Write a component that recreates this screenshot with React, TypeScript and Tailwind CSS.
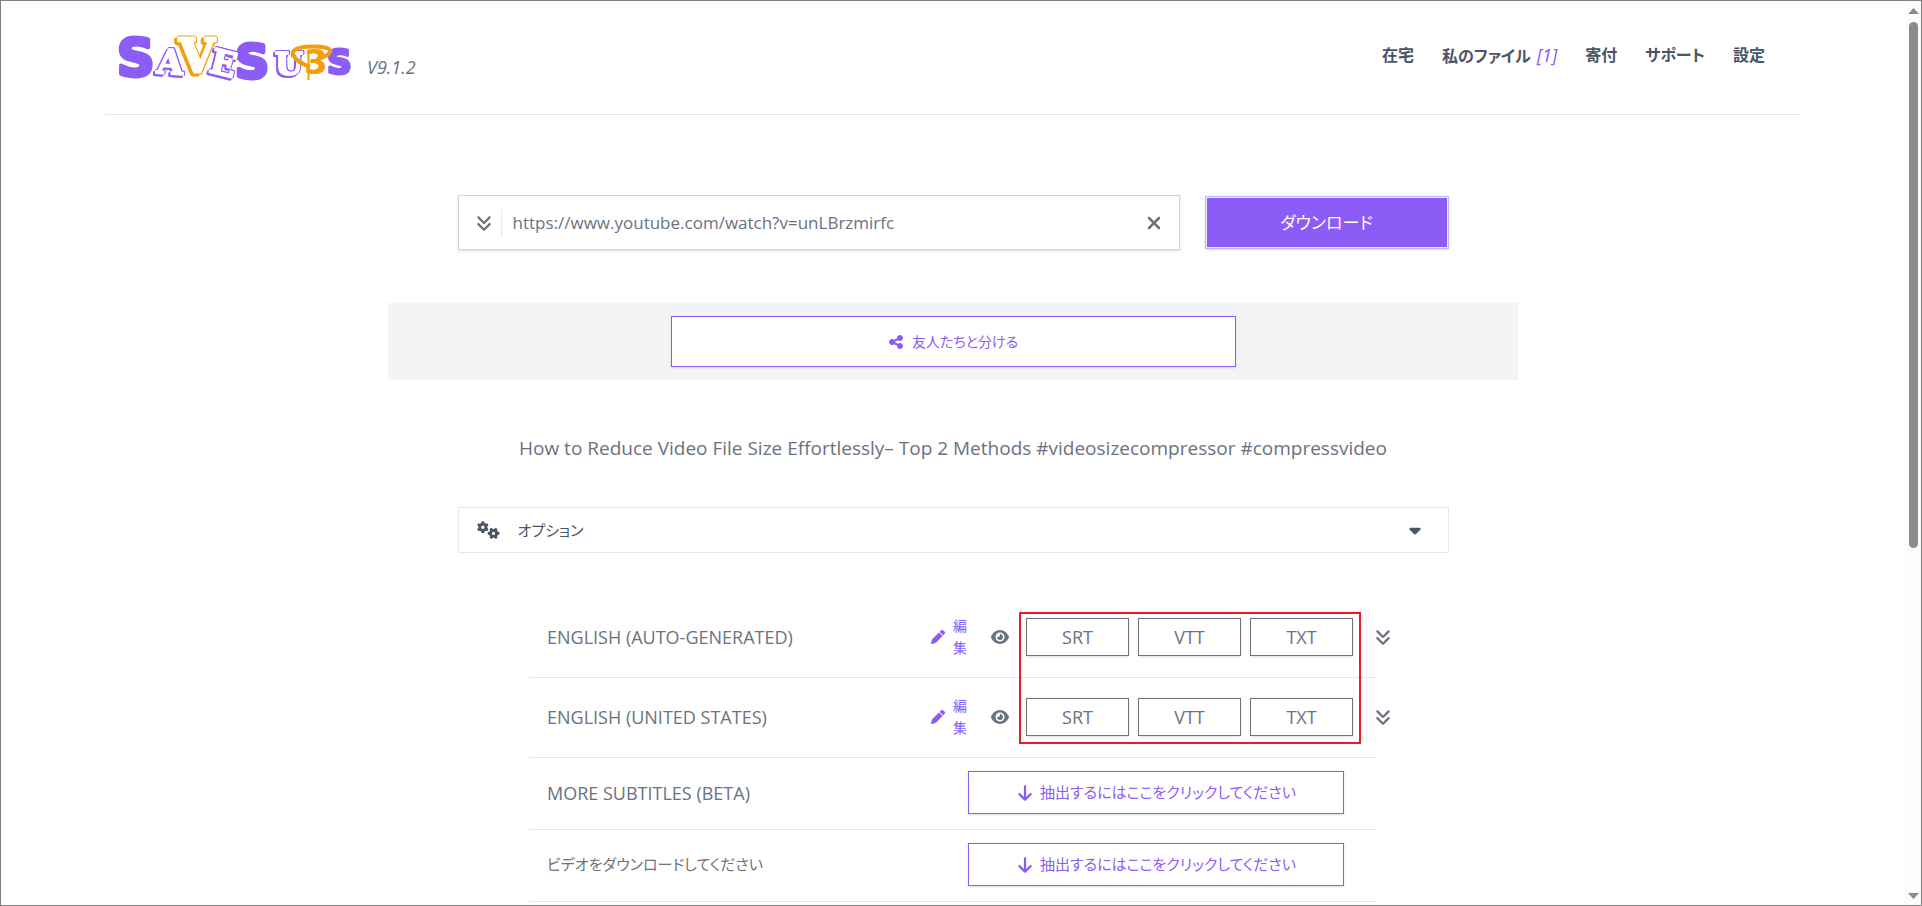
import {
  FaAnglesDown,
  FaArrowDown,
  FaCaretDown,
  FaEye,
  FaGears,
  FaPen,
  FaShareNodes,
  FaXmark,
} from 'react-icons/fa6';

const navItems = [
  { label: '在宅' },
  { label: '私のファイル', count: 1 },
  { label: '寄付' },
  { label: 'サポート' },
  { label: '設定' },
];

const subtitles = ['English (auto-generated)', 'English (United States)'];
const formats = ['SRT', 'VTT', 'TXT'];

function Logo() {
  return (
    <svg
      viewBox="0 0 238 48"
      className="h-12 w-[238px] overflow-visible"
      role="img"
      aria-label="SaveSubs"
      fontFamily="'DejaVu Serif', serif"
      fontWeight="700"
      strokeLinejoin="round"
    >
      <g fill="#8b5cf6" stroke="#8b5cf6" fontFamily="'DejaVu Sans', sans-serif">
        <text x="0" y="41" fontSize="52" strokeWidth="4">S</text>
        <text x="118" y="43" fontSize="47" strokeWidth="4">S</text>
        <text x="210" y="39" fontSize="34" strokeWidth="3">S</text>
      </g>
      {/* the filter chain makes a thin outline with a thick lower left edge */}
      <g
        fill="#fff"
        stroke="#fff"
        strokeWidth="2"
        className="[filter:drop-shadow(1px_0_0_#8b5cf6)_drop-shadow(0_-1px_0_#8b5cf6)_drop-shadow(-2px_2px_0_#8b5cf6)]"
      >
        <text x="40" y="39" fontSize="34" transform="rotate(4 54 28)">A</text>
        <text x="93" y="40" fontSize="34" transform="rotate(14 105 30)">E</text>
        <text x="158" y="40" fontSize="32">U</text>
      </g>
      <text
        x="62"
        y="37"
        fontSize="46"
        fill="#fff"
        stroke="#fff"
        strokeWidth="3"
        className="[filter:drop-shadow(1px_1px_0_#f59e0b)_drop-shadow(0_-1px_0_#f59e0b)_drop-shadow(-3px_2px_0_#f59e0b)]"
      >
        V
      </text>
      <g fill="none" stroke="#f59e0b" strokeWidth="4">
        <path d="M193 32C182 28 175 22 176 17C179 10 210 10 213 15C214 19 208 22 200 24" />
        <path d="M191.500 18V45" strokeWidth="2" />
      </g>
      <text x="187" y="39" fontSize="34" fill="#f59e0b" fontFamily="'DejaVu Sans', sans-serif">3</text>
    </svg>
  );
}

function Header() {
  return (
    <header className="mx-auto flex h-[114px] w-full max-w-[1696px] items-start justify-between border-b border-gray-200 pr-9 pl-3">
      <div className="flex pt-[34px]">
        <a href="#home">
          <Logo />
        </a>
        <span className="ml-3 pt-5 text-lg leading-6 text-gray-500 italic">V9.1.2</span>
      </div>
      <nav className="flex gap-7 pt-10 text-base leading-7 font-bold text-gray-600">
        {navItems.map((item) => (
          <a key={item.label} href="#nav">
            {item.label}
            {item.count && <i className="ml-1.5 text-lg leading-7 font-normal text-[#8b5cf6]">[{item.count}]</i>}
          </a>
        ))}
      </nav>
    </header>
  );
}

function SearchForm() {
  return (
    <form className="mx-auto mt-20 flex w-full max-w-[991px] items-center gap-[25px]">
      <div className="flex h-[55px] flex-1 items-center border border-gray-300 bg-white pr-[15px] pl-4 text-gray-500 shadow">
        <button type="button" aria-label="履歴" className="pr-2">
          <FaAnglesDown className="size-[18px]" />
        </button>
        <input
          type="text"
          aria-label="URL"
          defaultValue="https://www.youtube.com/watch?v=unLBrzmirfc"
          className="h-7 min-w-0 flex-1 border-l border-gray-200 pl-[11px] text-[17px] outline-none"
        />
        <button type="button" aria-label="クリア">
          <FaXmark className="size-5" />
        </button>
      </div>
      <button
        type="button"
        className="h-[53px] w-[244px] border border-violet-300 bg-[#8b5cf6] text-[17px] text-white shadow ring-1 ring-violet-100 ring-inset"
      >
        ダウンロード
      </button>
    </form>
  );
}

function SubtitleRow({ name }: { name: string }) {
  return (
    <li className="flex h-20 items-center border-b border-gray-200 pb-px pl-[18px]">
      <span className="flex-1 text-lg uppercase">{name}</span>
      <div className="-mr-[15px] flex items-center">
        <a href="#edit" className="flex items-center gap-2 text-sm leading-[22px] text-[#8b5cf6]">
          <FaPen className="size-[14px]" />
          <span className="w-[15px] break-all">編集</span>
        </a>
        <button type="button" aria-label="プレビュー" className="mr-[17px] ml-[23px]">
          <FaEye className="h-4 w-[18px]" />
        </button>
        <div className="flex gap-[9px]">
          {formats.map((format) => (
            <button
              key={format}
              type="button"
              className="h-[38px] w-[103px] border border-gray-500 bg-white text-lg shadow"
            >
              {format}
            </button>
          ))}
        </div>
        <button type="button" aria-label="その他" className="ml-[21px]">
          <FaAnglesDown className="size-[18px]" />
        </button>
      </div>
    </li>
  );
}

function ExtraRow({ children }: { children: React.ReactNode }) {
  return (
    <li className="flex h-[72px] items-center justify-between border-b border-gray-200 pr-[33px] pb-0.5 pl-[18px]">
      {children}
      <button
        type="button"
        className="flex h-[43px] w-[376px] items-center justify-center gap-1.5 border border-[#8b5cf6] bg-white text-[15px] text-[#8b5cf6] shadow"
      >
        <FaArrowDown className="size-[18px]" />
        抽出するにはここをクリックしてください
      </button>
    </li>
  );
}

function Scrollbar() {
  return (
    <div aria-hidden="true" className="flex w-4 shrink-0 flex-col items-center bg-[#fcfcfc] pt-[7px] pb-[6px]">
      <svg viewBox="0 0 11 6" className="h-[6px] w-[11px] fill-[#8b8b8b]">
        <path d="M0 6L5.500 0L11 6Z" />
      </svg>
      <div className="mt-2 h-[59%] w-[9px] rounded-full bg-[#8b8b8b]" />
      <svg viewBox="0 0 11 6" className="mt-auto h-[6px] w-[11px] fill-[#8b8b8b]">
        <path d="M0 0L5.500 6L11 0Z" />
      </svg>
    </div>
  );
}

export default function App() {
  return (
    <div className="flex h-screen overflow-hidden border border-[#808080] bg-white font-['Open_Sans','Noto_Sans_CJK_JP',sans-serif] text-gray-500 [font-feature-settings:'palt']">
      <div className="min-w-0 flex-1">
        <Header />
        <main>
          <SearchForm />

          <section className="mx-auto mt-[53px] flex h-[77px] w-full max-w-[1130px] items-center justify-center bg-gray-100">
            <button
              type="button"
              className="flex h-[51px] w-1/2 items-center justify-center gap-2 border border-[#8b5cf6] bg-white text-sm text-[#8b5cf6] shadow"
            >
              <FaShareNodes className="size-4" />
              友人たちと分ける
            </button>
          </section>

          <h1 className="mt-[54px] text-center text-[19px] leading-7">
            How to Reduce Video File Size Effortlessly– Top 2 Methods #videosizecompressor #compressvideo
          </h1>

          <button
            type="button"
            className="mx-auto mt-[45px] flex h-[46px] w-full max-w-[991px] items-center border border-gray-200 px-[18px] text-[15px] text-gray-600"
          >
            <FaGears className="h-[18px] w-[23px]" />
            <span className="ml-[18px]">オプション</span>
            <FaCaretDown className="mr-[6px] ml-auto size-[18px]" />
          </button>

          <div className="relative mx-auto mt-[45px] w-full max-w-[848px]">
            <ul>
              {subtitles.map((name) => (
                <SubtitleRow key={name} name={name} />
              ))}
              <ExtraRow>
                <span className="text-lg uppercase">More Subtitles (beta)</span>
              </ExtraRow>
              <ExtraRow>
                <span className="text-[15px]">ビデオをダウンロードしてください</span>
              </ExtraRow>
            </ul>
            {/* highlight around the format buttons */}
            <div className="pointer-events-none absolute top-[14px] right-4 h-[132px] w-[342px] border-2 border-[#ed1c24]" />
          </div>
        </main>
      </div>
      <Scrollbar />
    </div>
  );
}
